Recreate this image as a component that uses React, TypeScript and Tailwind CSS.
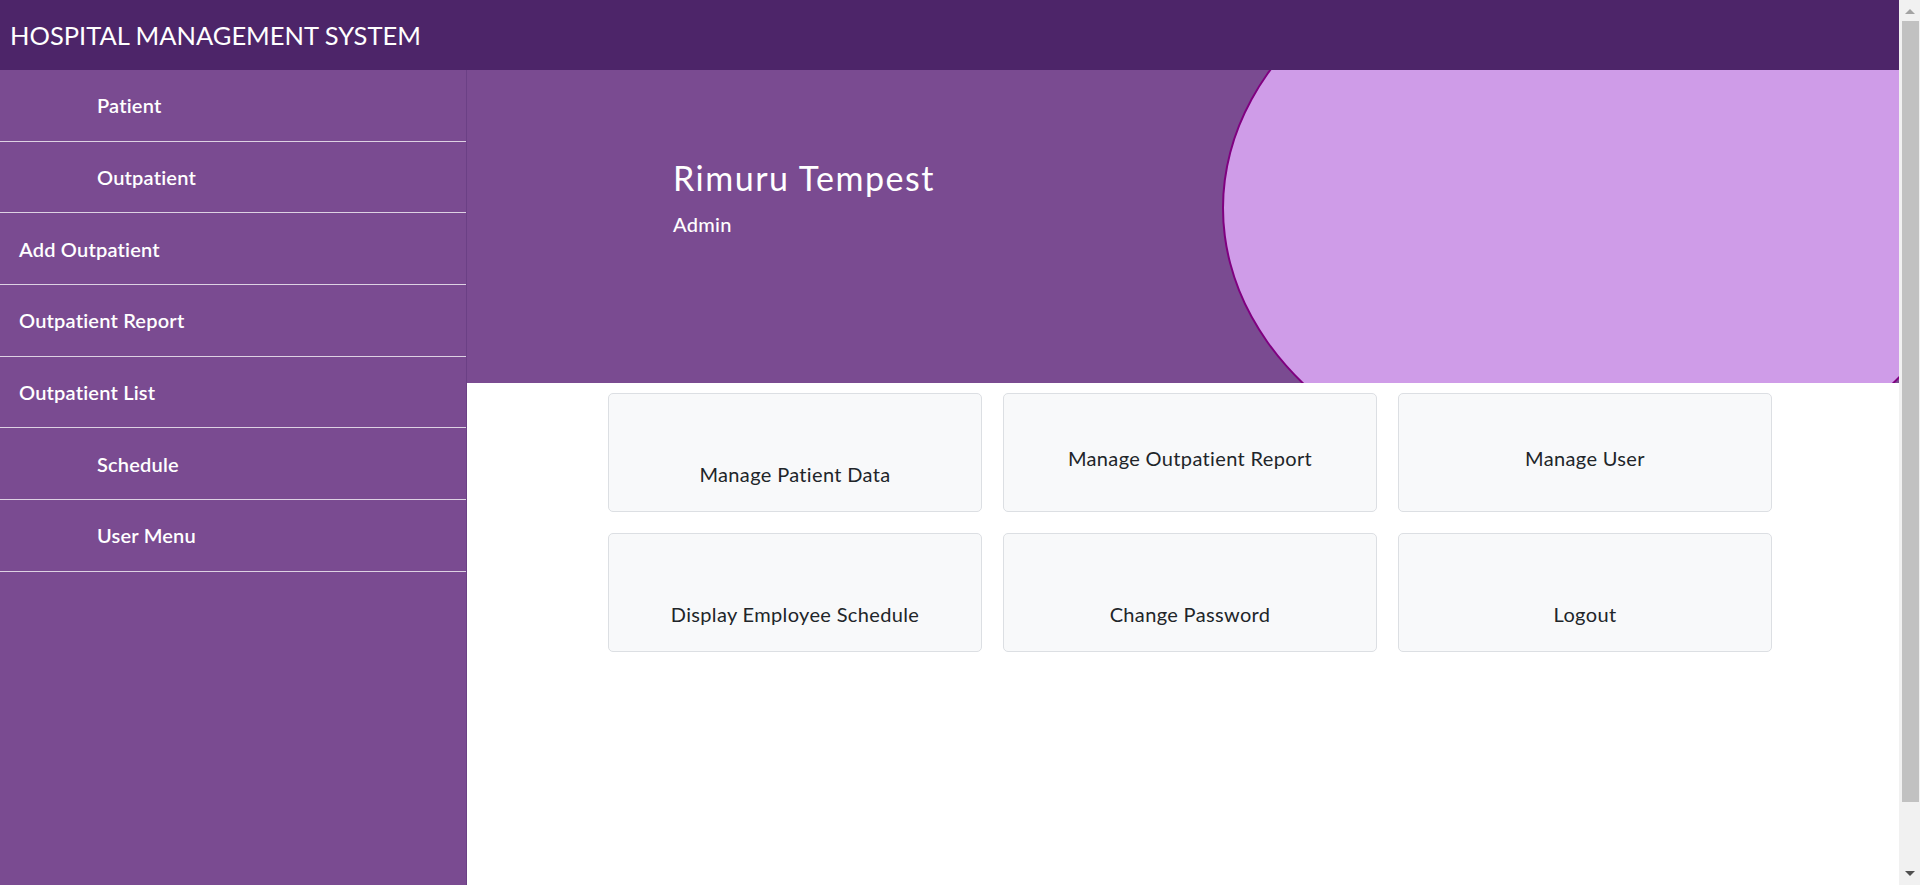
const menuItems = [
  { label: "Patient", sub: true },
  { label: "Outpatient", sub: true },
  { label: "Add Outpatient", sub: false },
  { label: "Outpatient Report", sub: false },
  { label: "Outpatient List", sub: false },
  { label: "Schedule", sub: true },
  { label: "User Menu", sub: true },
];

// low = text sits lower in the card (there is an empty icon slot above it)
const cards = [
  { label: "Manage Patient Data", low: true },
  { label: "Manage Outpatient Report", low: false },
  { label: "Manage User", low: false },
  { label: "Display Employee Schedule", low: true },
  { label: "Change Password", low: true },
  { label: "Logout", low: true },
];

function Sidebar() {
  return (
    <aside className="w-[467px] shrink-0 border-r border-[#6b4085] bg-[#7a4b91]">
      {menuItems.map((item) => (
        <a
          key={item.label}
          href="#"
          className={`flex h-[71.67px] items-center border-b border-[#ddd2e3] text-[20px] font-semibold tracking-[0.2px] text-white ${
            item.sub ? "pl-[97px]" : "pl-[19px]"
          }`}
        >
          {item.label}
        </a>
      ))}
    </aside>
  );
}

function Banner() {
  return (
    <section className="relative h-[313px] shrink-0 overflow-hidden bg-[#7a4b91]">
      <div className="absolute left-[755px] top-[-147px] h-[570px] w-[752px] rounded-[50%] border-2 border-[#800080] bg-[#cf9ce8]" />
      <div className="relative pl-[206px] pt-[88px] text-white">
        <h1 className="text-[34px] leading-[40px] font-normal tracking-[1.5px]">Rimuru Tempest</h1>
        <p className="mt-[14px] text-[20px] leading-[24px] font-medium tracking-[0.3px]">Admin</p>
      </div>
    </section>
  );
}

function Scrollbar() {
  return (
    <div className="flex w-[21px] shrink-0 flex-col items-center bg-[#f1f1f1]">
      <div className="mt-[9px] h-0 w-0 border-x-[5px] border-b-[5px] border-x-transparent border-b-[#a3a3a3]" />
      <div className="mt-[7px] ml-[2px] h-[781px] w-[17px] bg-[#c1c1c1]" />
      <div className="mt-[69px] h-0 w-0 border-x-[5px] border-t-[5px] border-x-transparent border-t-[#505050]" />
    </div>
  );
}

export default function App() {
  return (
    <div className="flex h-[885px] w-[1920px] overflow-hidden bg-white font-['Lato','Noto_Sans',sans-serif]">
      <div className="flex min-w-0 flex-1 flex-col">
        <header className="flex h-[70px] shrink-0 items-center bg-[#4d2569] pl-[10px]">
          <span className="text-[25.5px] font-normal text-white">
            HOSPITAL MANAGEMENT SYSTEM
          </span>
        </header>
        <div className="flex min-h-0 flex-1">
          <Sidebar />
          <main className="flex min-w-0 flex-1 flex-col">
            <Banner />
            <div className="ml-[141px] mt-[10px] grid w-[1164px] grid-cols-3 gap-[21px]">
              {cards.map((card) => (
                <a
                  key={card.label}
                  href="#"
                  className={`flex h-[119px] flex-col items-center rounded-[5px] border border-[#dcdfe3] bg-[#f8f9fa] text-[20px] leading-[24px] tracking-[0.35px] text-[#212529] ${
                    card.low ? "pt-[68px]" : "pt-[52px]"
                  }`}
                >
                  {card.label}
                </a>
              ))}
            </div>
          </main>
        </div>
      </div>
      <Scrollbar />
    </div>
  );
}
